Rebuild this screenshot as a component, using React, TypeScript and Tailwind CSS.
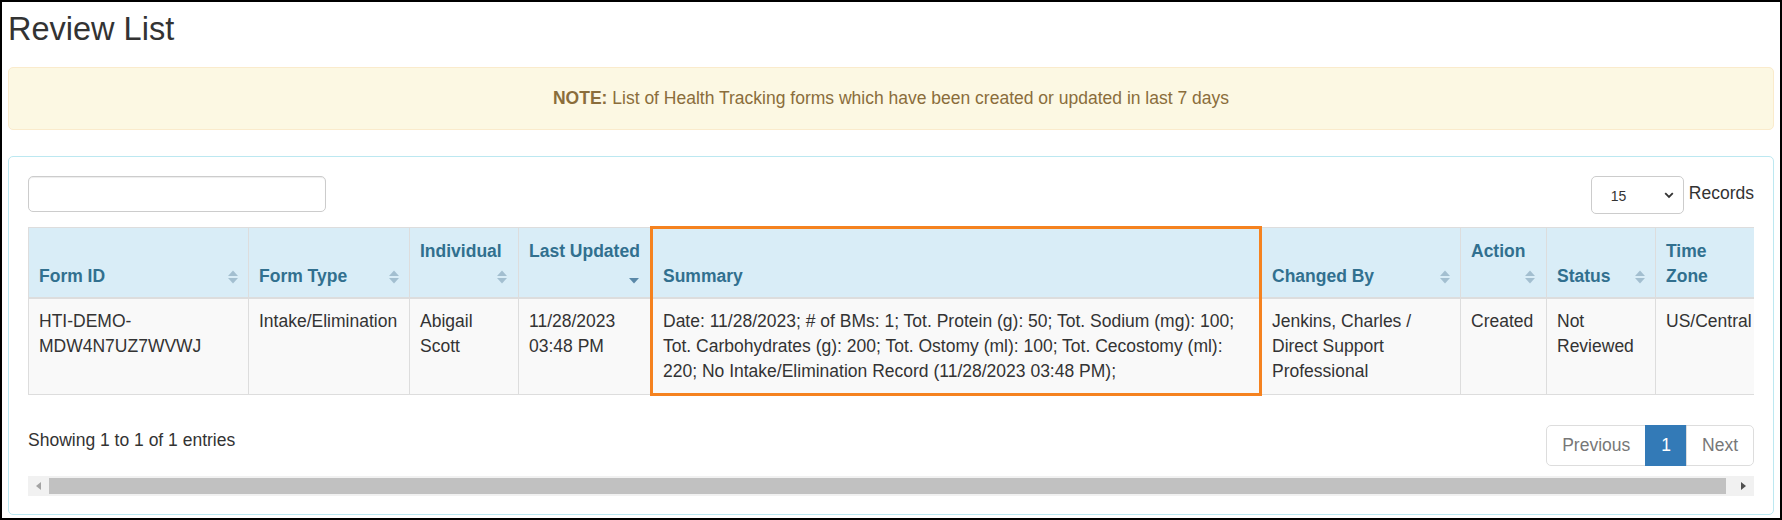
import React from "react";

type Col = {
  w: number;
  lines: string[];
  icon: "both" | "desc" | null;
  top?: boolean;
  orange?: boolean;
};

const cols: Col[] = [
  { w: 220, lines: ["Form ID"], icon: "both" },
  { w: 161, lines: ["Form Type"], icon: "both" },
  { w: 109, lines: ["Individual"], icon: "both", top: true },
  { w: 133, lines: ["Last Updated"], icon: "desc", top: true },
  { w: 609, lines: ["Summary"], icon: null, orange: true },
  { w: 200, lines: ["Changed By"], icon: "both" },
  { w: 86, lines: ["Action"], icon: "both", top: true },
  { w: 109, lines: ["Status"], icon: "both" },
  { w: 110, lines: ["Time", "Zone"], icon: null },
];

const row: string[] = [
  "HTI-DEMO-MDW4N7UZ7WVWJ",
  "Intake/Elimination",
  "Abigail Scott",
  "11/28/2023 03:48 PM",
  "Date: 11/28/2023; # of BMs: 1; Tot. Protein (g): 50; Tot. Sodium (mg): 100; Tot. Carbohydrates (g): 200; Tot. Ostomy (ml): 100; Tot. Cecostomy (ml): 220; No Intake/Elimination Record (11/28/2023 03:48 PM);",
  "Jenkins, Charles / Direct Support Professional",
  "Created",
  "Not Reviewed",
  "US/Central",
];

function SortIcon({ mode }: { mode: "both" | "desc" }) {
  const light = "#a3bfd0";
  const dark = "#5a88a8";
  return (
    <svg width="10" height="14" viewBox="0 0 10 14" className="block">
      <polygon points="0,6 5,0.5 10,6" fill={mode === "both" ? light : "transparent"} />
      <polygon points="0,8 10,8 5,13.5" fill={mode === "both" ? light : dark} />
    </svg>
  );
}

function HeaderContent({ c }: { c: Col }) {
  if (c.top) {
    return (
      <div className="flex flex-col h-[50px]">
        <div className="whitespace-nowrap h-[25px]">{c.lines[0]}</div>
        <div className="flex justify-end items-center h-[25px] pr-[1px]">
          {c.icon && <SortIcon mode={c.icon} />}
        </div>
      </div>
    );
  }
  return (
    <div className="flex h-[50px] justify-between">
      <div className="self-end">
        {c.lines.map((l, j) => (
          <div key={j} className="whitespace-nowrap">
            {l}
          </div>
        ))}
      </div>
      {c.icon && (
        <div className="self-end h-[25px] flex items-center shrink-0">
          <SortIcon mode={c.icon} />
        </div>
      )}
    </div>
  );
}

export default function App() {
  return (
    <div className="w-[1782px] h-[520px] box-border border-2 border-black bg-white overflow-hidden pt-[10px] px-[6px] font-['Liberation_Sans',Arial,sans-serif] text-[17.5px] leading-[25px] text-[#333333]">
      <h1 className="text-[32.5px] leading-[35px] font-normal text-[#333333] mb-[20px]">Review List</h1>

      <div className="border border-[#faebcc] bg-[#fcf8e3] rounded-[5px] py-[18px] px-[19px] text-center text-[#8a6d3b] mb-[26px]">
        <b>NOTE:</b> List of Health Tracking forms which have been created or updated in last 7 days
      </div>

      <div className="border border-[#bce8f1] rounded-[5px] pt-[19px] px-[19px] pb-[18px]">
        <div className="flex justify-between items-start mb-[12px]">
          <input
            type="text"
            className="w-[298px] h-[36px] border border-[#cccccc] rounded-[5px] shadow-[inset_0_1px_1px_rgba(0,0,0,0.075)] px-[12px] outline-none"
          />
          <div className="flex items-start">
            <div className="w-[93px] h-[38px] border border-[#cccccc] rounded-[5px] flex items-center justify-between pl-[19px] pr-[9px] text-[14px] leading-[20px]">
              <span className="pt-[2px]">15</span>
              <svg width="10" height="7" viewBox="0 0 10 7" className="block">
                <polyline points="1.2,1.2 5,5 8.8,1.2" fill="none" stroke="#333333" strokeWidth="1.8" />
              </svg>
            </div>
            <span className="ml-[5px] pt-[5px]">Records</span>
          </div>
        </div>

        <div className="overflow-hidden">
          <table className="table-fixed border-collapse w-[1737px] border border-[#dddddd]">
            <colgroup>
              {cols.map((c, i) => (
                <col key={i} style={{ width: c.w }} />
              ))}
            </colgroup>
            <thead>
              <tr>
                {cols.map((c, i) => (
                  <th
                    key={i}
                    className={
                      "bg-[#d9edf7] text-[#31708f] font-bold text-left align-bottom pt-[10px] pb-[8px] px-[10px] border-b-2 border-[#dddddd] " +
                      (c.orange
                        ? "border-x-[3px] border-t-[3px] border-x-[#f5821f] border-t-[#f5821f]"
                        : "border-x border-t")
                    }
                  >
                    <HeaderContent c={c} />
                  </th>
                ))}
              </tr>
            </thead>
            <tbody>
              <tr>
                {row.map((v, i) => (
                  <td
                    key={i}
                    className={
                      "bg-[#f9f9f9] align-top pt-[10px] pb-[9px] px-[10px] break-words " +
                      (cols[i].orange
                        ? "border-x-[3px] border-b-[3px] border-[#f5821f]"
                        : "border border-[#dddddd]")
                    }
                  >
                    {v}
                  </td>
                ))}
              </tr>
            </tbody>
          </table>

          <div className="flex justify-between items-start mt-[29px]">
            <div className="pt-[3px]">Showing 1 to 1 of 1 entries</div>
            <ul className="flex">
              <li className="border border-[#dddddd] rounded-l-[5px] px-[15px] py-[7px] text-[#777777] bg-white">Previous</li>
              <li className="-ml-px border border-[#337ab7] bg-[#337ab7] px-[15px] py-[7px] text-white">1</li>
              <li className="-ml-px border border-[#dddddd] rounded-r-[5px] px-[15px] py-[7px] text-[#777777] bg-white">Next</li>
            </ul>
          </div>
        </div>

        <div className="mt-[10px] h-[20px] bg-[#f1f1f1] flex">
          <div className="w-[21px] flex items-center justify-center">
            <svg width="5" height="8" viewBox="0 0 5 8" className="block">
              <polygon points="5,0 5,8 0,4" fill="#a3a3a3" />
            </svg>
          </div>
          <div className="flex-1 my-[2px] mr-[7px] bg-[#c1c1c1]" />
          <div className="w-[21px] flex items-center justify-center">
            <svg width="5" height="8" viewBox="0 0 5 8" className="block">
              <polygon points="0,0 5,4 0,8" fill="#505050" />
            </svg>
          </div>
        </div>
      </div>
    </div>
  );
}
